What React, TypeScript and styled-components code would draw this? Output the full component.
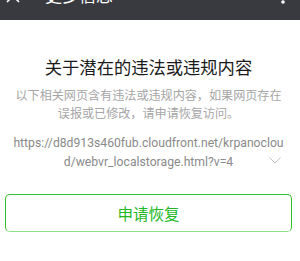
import styled, { createGlobalStyle } from "styled-components";

const GlobalStyle = createGlobalStyle`
  html, body {
    margin: 0;
    padding: 0;
    background: #ffffff;
  }
  body {
    font-family: Roboto, "Noto Sans CJK SC", "Noto Sans", sans-serif;
    -webkit-font-smoothing: antialiased;
  }
`;

const Page = styled.div`
  width: 300px;
  height: 261px;
  overflow: hidden;
  background: #ffffff;
`;

/* only the lower part of the wechat title bar is visible in the capture */
const TitleBar = styled.div`
  height: 20px;
  background: #393a3f;
  overflow: hidden;
  display: flex;
  flex-direction: column;
  justify-content: flex-end;
`;

const TitleRow = styled.div`
  flex: none;
  height: 48px;
  display: flex;
  align-items: center;
  padding: 0 8px 0 4px;
  color: #ffffff;
`;

const IconButton = styled.div`
  width: 18px;
  height: 36px;
  display: flex;
  align-items: center;
  justify-content: center;
  flex: none;
`;

const TitleText = styled.div`
  margin-left: 23px;
  font-size: 17px;
  font-family: "Noto Sans CJK SC", sans-serif;
  line-height: 20px;
  padding-bottom: 2px;
  flex: 1;
`;

const Content = styled.div`
  display: flex;
  flex-direction: column;
  align-items: center;
  padding: 0 8px 0 5px;
`;

const Heading = styled.h1`
  margin: 37px 0 0;
  font-size: 17.3px;
  font-weight: 400;
  line-height: 20px;
  color: #1a1a1a;
  font-family: "Noto Sans CJK SC", sans-serif;
  text-align: center;
`;

const Desc = styled.p`
  margin: 9px 0 0;
  width: 272px;
  font-size: 12.1px;
  line-height: 18px;
  color: #a6a6a6;
  font-family: "Noto Sans CJK SC", sans-serif;
  text-align: center;
`;

const UrlBox = styled.div`
  position: relative;
  margin-top: 12px;
  width: 274px;
  font-size: 12.2px;
  line-height: 19px;
  color: #8a8a8a;
  text-align: center;
  word-break: break-all;
`;

const Chevron = styled.svg`
  position: absolute;
  right: 5px;
  bottom: 8px;
`;

const RecoverButton = styled.button`
  margin-top: 22px;
  width: 287px;
  height: 38px;
  box-sizing: border-box;
  border: 1.5px solid #2fc02b;
  border-bottom-color: #8ee08c;
  border-radius: 5px;
  background: #ffffff;
  color: #22b81f;
  font-size: 15.5px;
  font-family: "Noto Sans CJK SC", sans-serif;
  display: flex;
  align-items: center;
  justify-content: center;
  padding: 0;
`;

export default function App() {
  return (
    <Page>
      <GlobalStyle />
      <TitleBar>
        <TitleRow>
          <IconButton>
            <svg width="14" height="14" viewBox="0 0 14 14">
              <path d="M1 1 L13 13 M13 1 L1 13" stroke="#ffffff" strokeWidth="1.6" fill="none" />
            </svg>
          </IconButton>
          <TitleText>更多信息</TitleText>
          <IconButton>
            <svg width="4" height="18" viewBox="0 0 4 18">
              <circle cx="2" cy="3" r="1.8" fill="#ffffff" />
              <circle cx="2" cy="9" r="1.8" fill="#ffffff" />
              <circle cx="2" cy="15" r="1.8" fill="#ffffff" />
            </svg>
          </IconButton>
        </TitleRow>
      </TitleBar>
      <Content>
        <Heading>关于潜在的违法或违规内容</Heading>
        <Desc>以下相关网页含有违法或违规内容，如果网页存在误报或已修改，请申请恢复访问。</Desc>
        <UrlBox>
          https://d8d913s460fub.cloudfront.net/krpanocloud/webvr_localstorage.html?v=4
          <Chevron width="12" height="7" viewBox="0 0 12 7">
            <path d="M0.5 0.5 L6 6 L11.5 0.5" stroke="#c2c2c2" strokeWidth="1" fill="none" />
          </Chevron>
        </UrlBox>
        <RecoverButton>申请恢复</RecoverButton>
      </Content>
    </Page>
  );
}
